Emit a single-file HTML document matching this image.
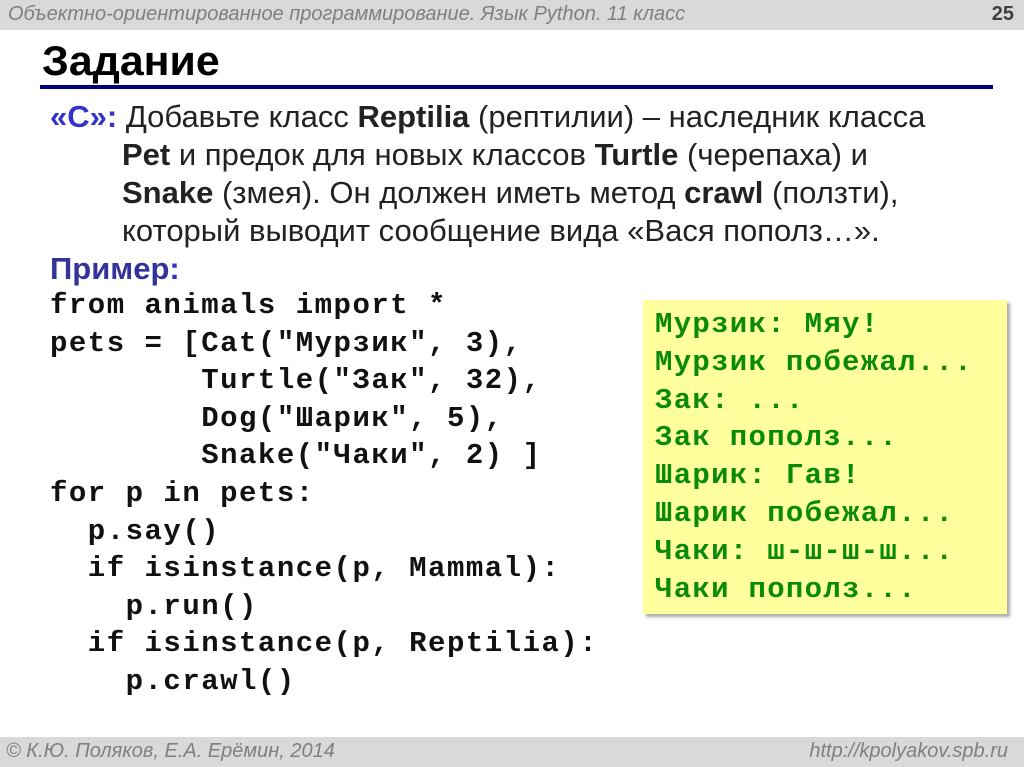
<!DOCTYPE html>
<html><head><meta charset="utf-8"><style>
body{margin:0;width:1024px;height:767px;position:relative;background:#fff;font-family:"Liberation Sans",sans-serif;overflow:hidden}
.hdr{position:absolute;left:0;top:0;width:1024px;height:30px;background:#d9d9d9}
.hdr .t{position:absolute;left:8px;top:3px;font-size:20px;font-style:italic;color:#808080}
.hdr .n{position:absolute;right:10px;top:3px;font-size:20px;font-weight:bold;color:#404040}
h1{position:absolute;left:42px;top:37px;margin:0;font-size:42px;font-weight:bold;transform:scaleX(1.02);transform-origin:left}
.line{position:absolute;left:40px;top:85px;width:953px;height:4px;background:#000080}
.txt{position:absolute;left:50px;top:98px;width:960px;font-size:31px;line-height:38px;color:#222;white-space:nowrap}
.txt p{margin:0;padding-left:72px;text-indent:-72px}
.bl{color:#3333cc;font-weight:bold}
.pr{color:#333399;font-weight:bold}
pre{position:absolute;left:50px;top:287px;margin:0;font-family:"Liberation Mono",monospace;font-weight:bold;font-size:29px;line-height:37.6px;letter-spacing:1.5px;color:#111}
.box{position:absolute;left:643px;top:300px;width:364px;height:314px;background:#ffff9e;box-shadow:3px 3px 3px #aaa}
.box pre{left:12px;top:6px;color:#0a8a0a;line-height:37.8px;letter-spacing:1.3px}
.ftr{position:absolute;left:0;top:737px;width:1024px;height:30px;background:#d9d9d9;color:#808080;font-style:italic;font-size:20px}
.ftr .l{position:absolute;left:6px;top:3px}
.ftr .r{position:absolute;right:16px;top:3px}
</style></head><body>
<div class="hdr"><span class="t">Объектно-ориентированное программирование. Язык Python. 11 класс</span><span class="n">25</span></div>
<h1>Задание</h1>
<div class="line"></div>
<div class="txt"><p><span class="bl">«С»:</span> Добавьте класс <b>Reptilia</b> (рептилии) – наследник класса<br><b>Pet</b> и предок для новых классов <b>Turtle</b> (черепаха) и<br><b>Snake</b> (змея). Он должен иметь метод <b>crawl</b> (ползти),<br>который выводит сообщение вида «Вася пополз…».</p>
<p style="padding:0;text-indent:0"><span class="pr">Пример</span><span class="bl">:</span></p></div>
<pre>from animals import *
pets = [Cat("Мурзик", 3),
        Turtle("Зак", 32),
        Dog("Шарик", 5),
        Snake("Чаки", 2) ]
for p in pets:
  p.say()
  if isinstance(p, Mammal):
    p.run()
  if isinstance(p, Reptilia):
    p.crawl()</pre>
<div class="box"><pre>Мурзик: Мяу!
Мурзик побежал...
Зак: ...
Зак пополз...
Шарик: Гав!
Шарик побежал...
Чаки: ш-ш-ш-ш...
Чаки пополз...</pre></div>
<div class="ftr"><span class="l">© К.Ю. Поляков, Е.А. Ерёмин, 2014</span><span class="r">http://kpolyakov.spb.ru</span></div>
</body></html>
